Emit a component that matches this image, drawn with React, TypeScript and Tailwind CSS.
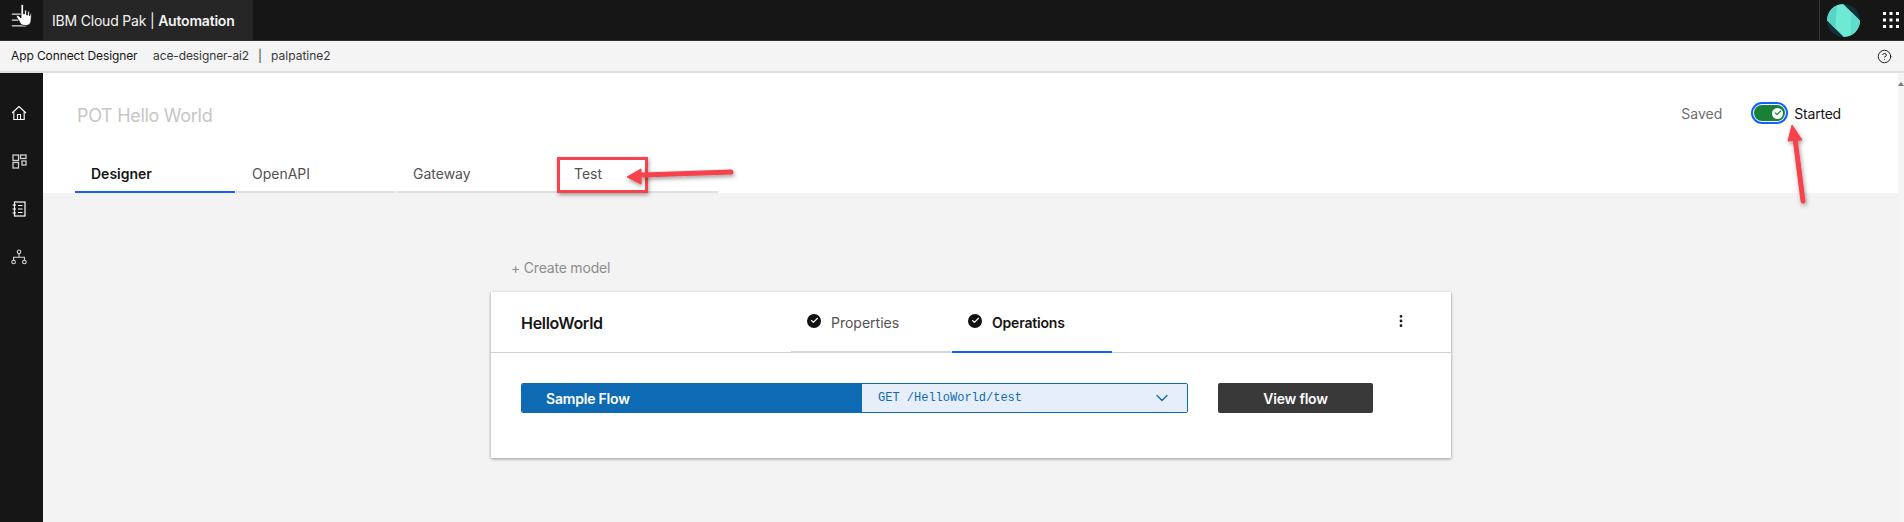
import React from "react";
import { Check, ChevronDown, CircleHelp, EllipsisVertical, Menu } from "lucide-react";

const plex = "font-['Inter','Noto_Sans',sans-serif]";

const CheckBadge = () => (
  <span className="w-[14px] h-[14px] rounded-full bg-[#111] flex items-center justify-center shrink-0 -mt-[3px]">
    <Check size={9} strokeWidth={3} className="text-white" />
  </span>
);

const PageTab = ({ label, active }: { label: string; active?: boolean }) => (
  <div
    className={`w-[160px] h-[40px] pl-[16px] pt-[10px] mr-[1px] border-b-2 text-[14px] ${
      active
        ? "border-[#0f62fe] font-semibold text-[#161616]"
        : "border-[#e0e0e0] text-[#525252]"
    }`}
  >
    {label}
  </div>
);

const SideIcon = ({ children }: { children: React.ReactNode }) => (
  <div className="h-[48px] flex items-center justify-center pr-[5px] text-white">{children}</div>
);

const gridDots = [0, 6.5, 13];

export default function App() {
  return (
    <div className={`relative w-[1904px] h-[522px] overflow-hidden flex flex-col bg-[#f3f3f3] ${plex}`}>
      {/* top bar */}
      <header className="h-[41px] bg-[#161616] border-b border-[#333] flex items-stretch shrink-0">
        <div className="w-[43px] flex items-center justify-center pr-[6px] text-[#e0e0e0]">
          <Menu size={20} strokeWidth={1.5} />
        </div>
        <div className="w-[210px] bg-[#262626] flex items-center pl-[9px] text-[14px] tracking-[-0.2px] text-[#f4f4f4]">
          IBM Cloud Pak |&nbsp;<span className="font-semibold">Automation</span>
        </div>
        <div className="flex-1" />
        <div className="w-[85px] border-l border-[#393939] flex items-center pl-[7px]">
          <svg width="33" height="33" viewBox="0 0 33 33">
            <defs>
              <clipPath id="avatarClip">
                <circle cx="16.5" cy="16.5" r="16.5" />
              </clipPath>
            </defs>
            <g clipPath="url(#avatarClip)">
              <rect width="33" height="33" fill="#10303a" />
              <g transform="rotate(45 16.5 16.5)">
                <rect x="-4" y="5" width="41" height="23" fill="#6fe8d4" />
                <path d="M16.5 5 L37 5 L37 28 Z" fill="#5fdccb" />
                <path d="M16.5 28 L-4 28 L-4 5 Z" fill="#56d4c4" />
              </g>
            </g>
          </svg>
          <svg width="16" height="16" viewBox="0 0 16 16" className="ml-[23px]" fill="#fff">
            {gridDots.map((y) =>
              gridDots.map((x) => <rect key={`${x}-${y}`} x={x} y={y} width="3" height="3" />)
            )}
          </svg>
        </div>
      </header>

      {/* sub bar */}
      <div className="h-[32px] bg-[#f4f4f4] border-b-2 border-[#e0e0e0] flex items-center pl-[11px] pr-[12px] text-[12px] text-[#393939] shrink-0">
        <span className="text-[#161616] w-[142px] tracking-[-0.1px]">App Connect Designer</span>
        <span className="tracking-[-0.1px]">ace-designer-ai2</span>
        <span className="mx-[9px]">|</span>
        <span>palpatine2</span>
        <CircleHelp size={15} strokeWidth={1.5} className="ml-auto text-[#161616]" />
      </div>

      <div className="flex-1 flex min-h-0">
        {/* side nav */}
        <nav className="w-[43px] bg-[#161616] pt-[16px] shrink-0">
          <SideIcon>
            <svg width="16" height="16" viewBox="0 0 16 16" fill="none" stroke="#fff" strokeWidth="1.1">
              <path d="M1 8 L8 1.5 L15 8" />
              <path d="M2.8 6.5 V14.5 H13.2 V6.5" />
              <path d="M6.5 14.5 V9.5 H9.5 V14.5" />
            </svg>
          </SideIcon>
          <SideIcon>
            <svg width="15" height="15" viewBox="0 0 15 15" fill="none" stroke="#cfcfcf" strokeWidth="1.3">
              <rect x="1" y="1" width="5.5" height="5.5" />
              <rect x="8.5" y="1" width="5.5" height="3.5" />
              <rect x="1" y="8.5" width="5.5" height="5.5" />
              <rect x="10" y="7" width="4" height="4" />
            </svg>
          </SideIcon>
          <SideIcon>
            <svg width="14" height="16" viewBox="0 0 14 16" fill="none" stroke="#fff" strokeWidth="1.2">
              <rect x="2.5" y="1" width="10.5" height="14" />
              <path d="M0.5 4 H4 M0.5 8 H4 M0.5 12 H4" />
              <path d="M6 4.5 H10.5 M6 8 H10.5 M6 11.5 H10.5" />
            </svg>
          </SideIcon>
          <SideIcon>
            <svg width="16" height="16" viewBox="0 0 16 16" fill="none" stroke="#d8d8d8" strokeWidth="1.1">
              <circle cx="8" cy="2.8" r="1.8" />
              <circle cx="2.6" cy="13" r="1.8" />
              <circle cx="13.4" cy="13" r="1.8" />
              <path d="M8 4.6 V8.2 M2.6 11.2 V8.2 H13.4 V11.2" />
            </svg>
          </SideIcon>
        </nav>

        <main className="flex-1 flex flex-col min-w-0">
          {/* flow header */}
          <section className="h-[120px] bg-white flex flex-col shrink-0">
            <div className="h-[80px] flex items-start justify-between pl-[34px] pt-[28px]">
              <h1 className="text-[18px] leading-[28px] pt-[1px] tracking-[-0.3px] text-[#c6c6c6]">POT Hello World</h1>
              <div className="flex items-center text-[14px] h-[24px] pr-[57px]">
                <span className="text-[#6f6f6f] mr-[29px]">Saved</span>
                <span className="w-[37px] h-[22px] rounded-full border-2 border-[#0f62fe] p-[1px] mr-[6px]">
                  <span className="h-full rounded-full bg-[#198038] flex items-center justify-end pr-[2px]">
                    <span className="w-[11px] h-[11px] rounded-full bg-white flex items-center justify-center">
                      <Check size={8} strokeWidth={3.5} className="text-[#198038]" />
                    </span>
                  </span>
                </span>
                <span className="text-[#161616] tracking-[-0.2px]">Started</span>
              </div>
            </div>
            <div className="flex pl-[32px]">
              <PageTab label="Designer" active />
              <PageTab label="OpenAPI" />
              <PageTab label="Gateway" />
              <PageTab label="Test" />
            </div>
          </section>

          {/* model area */}
          <section className="pl-[448px] pt-[64px]">
            <div className="h-[35px] pl-[20px] text-[14px] text-[#8d8d8d] tracking-[-0.2px]">+ Create model</div>
            <div className="w-[960px] h-[166px] bg-white shadow-[0_1px_3px_rgba(0,0,0,0.4)]">
              <div className="h-[61px] border-b border-[#c8d2d2] flex items-stretch">
                <div className="w-[300px] pl-[30px] pt-[19px] text-[16px] font-semibold text-[#161616] tracking-[-0.3px]">
                  HelloWorld
                </div>
                <div className="w-[160px] -mb-[1px] border-b-2 border-[#d6d6d6] mr-[1px] flex items-center gap-[10px] pl-[16px] pt-[1px] text-[14px] text-[#525252]">
                  <CheckBadge />
                  Properties
                </div>
                <div className="w-[160px] -mb-[1px] border-b-2 border-[#0f62fe] flex items-center gap-[10px] pl-[16px] pt-[1px] text-[14px] font-semibold text-[#161616] tracking-[-0.2px]">
                  <CheckBadge />
                  Operations
                </div>
                <div className="flex-1 flex items-center justify-end pr-[42px] pb-[2px]">
                  <EllipsisVertical size={16} strokeWidth={2.2} className="text-[#161616]" />
                </div>
              </div>
              <div className="flex pl-[30px] pt-[30px]">
                <div className="w-[667px] h-[30px] flex rounded-[2px] overflow-hidden border border-[#0f6ab4]">
                  <div className="w-[340px] bg-[#0f6ab4] text-white text-[14px] font-semibold flex items-center pl-[24px] tracking-[-0.2px]">
                    Sample Flow
                  </div>
                  <div className="flex-1 bg-[#e6eff9] flex items-center pl-[16px] pr-[15px] text-[12px] text-[#0f6ab4] font-['Liberation_Mono',monospace]">
                    GET /HelloWorld/test
                    <ChevronDown size={20} strokeWidth={1.6} className="ml-auto" />
                  </div>
                </div>
                <div className="w-[155px] h-[30px] ml-[30px] rounded-[2px] bg-[#393939] text-white text-[14px] font-semibold flex items-center justify-center tracking-[-0.2px]">
                  View flow
                </div>
              </div>
            </div>
          </section>
        </main>

        {/* scrollbar gutter */}
        <div className="w-[6px] bg-[#f4f4f4] shrink-0 flex justify-center pt-[9px]">
          <span className="w-0 h-0 border-x-[3px] border-x-transparent border-b-[4px] border-b-[#777]" />
        </div>
      </div>

      {/* annotations over the screenshot */}
      <div className="absolute left-[557px] top-[157px] w-[91px] h-[36px] border-[3px] border-[#f5424b] shadow-[1px_2px_4px_rgba(0,0,0,0.35)]" />
      <svg className="absolute left-0 top-0 pointer-events-none" width="1904" height="522" viewBox="0 0 1904 522">
        <defs>
          <filter id="arrowShadow" x="-20%" y="-20%" width="140%" height="160%">
            <feDropShadow dx="1" dy="2" stdDeviation="2" floodColor="#000" floodOpacity="0.4" />
          </filter>
        </defs>
        <g filter="url(#arrowShadow)" fill="#f5424b" stroke="#f5424b" strokeLinejoin="round">
          <path d="M731 172 L643 175" strokeWidth="5" strokeLinecap="round" fill="none" />
          <path d="M627 177 L641 169 L641 184 Z" strokeWidth="1" />
          <path d="M1803 201 L1795 138" strokeWidth="5" strokeLinecap="round" fill="none" />
          <path d="M1792 125 L1802 140 L1788 141 Z" strokeWidth="1" />
        </g>
        {/* hand cursor */}
        <path
          d="M21 5.5 C21 4 23.5 4 23.5 5.5 L23.5 14 L24.5 14 L24.5 11 C24.5 9.6 26.6 9.6 26.6 11 L26.6 15 L27.6 15 L27.6 12 C27.6 10.8 29.4 10.8 29.4 12 L29.4 15.5 L30 15.5 C30 13 31.4 13 31.4 15 L31 21 C30.5 24.5 28.5 25.5 25 25.5 C21.5 25.5 20.5 24 19 21 L16.5 17 C16 15.5 17.5 14.5 19 16 L21 18 Z"
          fill="#fff"
          stroke="#111"
          strokeWidth="0.8"
        />
      </svg>
    </div>
  );
}
